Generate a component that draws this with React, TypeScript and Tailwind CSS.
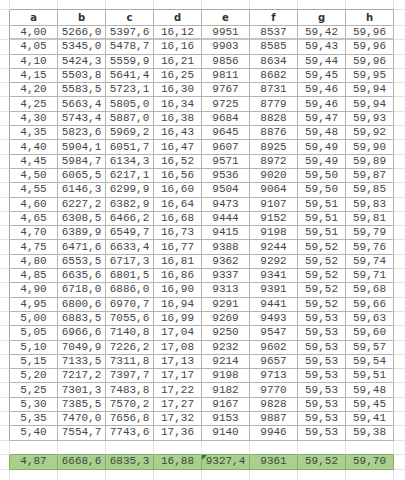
const cols = ['a', 'b', 'c', 'd', 'e', 'f', 'g', 'h'];

const a = ['4,00','4,05','4,10','4,15','4,20','4,25','4,30','4,35','4,40','4,45','4,50','4,55','4,60','4,65','4,70','4,75','4,80','4,85','4,90','4,95','5,00','5,05','5,10','5,15','5,20','5,25','5,30','5,35','5,40'];
const b = ['5266,0','5345,0','5424,3','5503,8','5583,5','5663,4','5743,4','5823,6','5904,1','5984,7','6065,5','6146,3','6227,2','6308,5','6389,9','6471,6','6553,5','6635,6','6718,0','6800,6','6883,5','6966,6','7049,9','7133,5','7217,2','7301,3','7385,5','7470,0','7554,7'];
const c = ['5397,6','5478,7','5559,9','5641,4','5723,1','5805,0','5887,0','5969,2','6051,7','6134,3','6217,1','6299,9','6382,9','6466,2','6549,7','6633,4','6717,3','6801,5','6886,0','6970,7','7055,6','7140,8','7226,2','7311,8','7397,7','7483,8','7570,2','7656,8','7743,6'];
const d = ['16,12','16,16','16,21','16,25','16,30','16,34','16,38','16,43','16,47','16,52','16,56','16,60','16,64','16,68','16,73','16,77','16,81','16,86','16,90','16,94','16,99','17,04','17,08','17,13','17,17','17,22','17,27','17,32','17,36'];
const e = ['9951','9903','9856','9811','9767','9725','9684','9645','9607','9571','9536','9504','9473','9444','9415','9388','9362','9337','9313','9291','9269','9250','9232','9214','9198','9182','9167','9153','9140'];
const f = ['8537','8585','8634','8682','8731','8779','8828','8876','8925','8972','9020','9064','9107','9152','9198','9244','9292','9341','9391','9441','9493','9547','9602','9657','9713','9770','9828','9887','9946'];
const g = ['59,42','59,43','59,44','59,45','59,46','59,46','59,47','59,48','59,49','59,49','59,50','59,50','59,51','59,51','59,51','59,52','59,52','59,52','59,52','59,52','59,53','59,53','59,53','59,53','59,53','59,53','59,53','59,53','59,53'];
const h = ['59,96','59,96','59,96','59,95','59,94','59,94','59,93','59,92','59,90','59,89','59,87','59,85','59,83','59,81','59,79','59,76','59,74','59,71','59,68','59,66','59,63','59,60','59,57','59,54','59,51','59,48','59,45','59,41','59,38'];

const rows = a.map((_, i) => [a[i], b[i], c[i], d[i], e[i], f[i], g[i], h[i]]);
const summary = ['4,87', '6668,6', '6835,3', '16,88', '9327,4', '9361', '59,52', '59,70'];

const mono = "font-['Liberation_Mono','Courier_New',monospace] text-[11px] text-[#454545]";

function EmptyRow({ height, bottom }: { height: string; bottom: 'faint' | 'table' | 'green' }) {
  const under =
    bottom === 'table' ? 'border-b-[#a8a8a8]' : bottom === 'green' ? 'border-b-[#86b069]' : 'border-b-[#e3e3e3]';
  return (
    <div className={`flex ${height}`}>
      <div className="w-[10px] shrink-0 border-r border-b border-[#e3e3e3]" />
      {cols.map((k) => (
        <div key={k} className={`w-[48px] shrink-0 border-r border-b border-[#e3e3e3] ${under}`} />
      ))}
      <div className="flex-1 border-b border-[#e3e3e3]" />
    </div>
  );
}

export default function App() {
  return (
    <div className="w-[405px] h-[480px] overflow-hidden bg-white">
      <EmptyRow height="h-[10px]" bottom="table" />

      {/* header */}
      <div className="flex h-[16px]">
        <div className="w-[10px] shrink-0 border-r border-b border-[#e3e3e3] border-r-[#a8a8a8]" />
        {cols.map((k) => (
          <div
            key={k}
            className="w-[48px] shrink-0 border-r border-b border-[#b4b4b4] flex items-center justify-center font-['DejaVu_Sans','Verdana',sans-serif] font-bold text-[10px] text-[#333]"
          >
            {k}
          </div>
        ))}
        <div className="flex-1 border-b border-[#e3e3e3] border-l-0" />
      </div>

      {rows.map((r, i) => (
        <div key={i} className="flex h-[14.31px]">
          <div className="w-[10px] shrink-0 border-r border-b border-[#e3e3e3] border-r-[#a8a8a8]" />
          {r.map((v, j) => (
            <div
              key={j}
              className={`w-[48px] shrink-0 border-r flex items-center justify-center leading-none ${mono} ${
                i === 0 ? 'border-b-2 border-[#b4b4b4] border-b-[#c4c4c4]' : 'border-b border-[#b4b4b4]'
              }`}
            >
              {v}
            </div>
          ))}
          <div className="flex-1 border-b border-[#e3e3e3]" />
        </div>
      ))}

      <EmptyRow height="h-[14px]" bottom="green" />

      {/* summary row */}
      <div className="flex h-[15px]">
        <div className="w-[10px] shrink-0 border-r border-b border-[#e3e3e3] border-r-[#86b069]" />
        {summary.map((v, j) => (
          <div
            key={j}
            className={`relative w-[48px] shrink-0 border-r border-b border-[#86b069] bg-[#a9d08e] flex items-center justify-center leading-none ${mono} text-[#3c4a33]`}
          >
            {j === 4 && (
              <span className="absolute left-0 top-0 w-0 h-0 border-t-[5px] border-r-[5px] border-t-[#1f7a3a] border-r-transparent" />
            )}
            {v}
          </div>
        ))}
        <div className="flex-1 border-b border-[#e3e3e3]" />
      </div>

      <EmptyRow height="h-[15px]" bottom="faint" />
    </div>
  );
}
